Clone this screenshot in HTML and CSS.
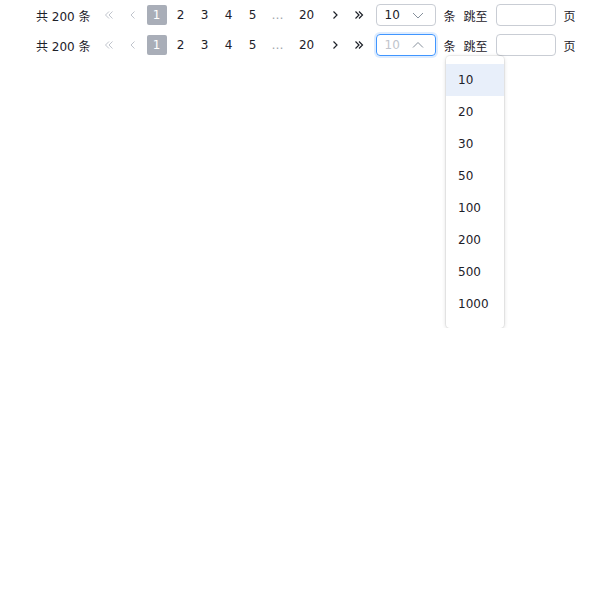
FILE: index.html
```html
<!DOCTYPE html>
<html>
<head>
<meta charset="utf-8">
<link rel="stylesheet" href="styles.css">
</head>
<body>
<div class="page">
  <div class="pager">
    <span class="total">共 200 条</span>
    <ul class="pages">
      <li class="item disabled"><svg width="12" height="12" viewBox="0 0 12 12"><path d="M6 2.5 2.5 6 6 9.5M9.5 2.5 6 6 9.5 9.5" fill="none" stroke="currentColor" stroke-width="1"/></svg></li>
      <li class="item disabled"><svg width="12" height="12" viewBox="0 0 12 12"><path d="M7.5 2.5 4 6 7.5 9.5" fill="none" stroke="currentColor" stroke-width="1"/></svg></li>
      <li class="item active">1</li>
      <li class="item">2</li>
      <li class="item">3</li>
      <li class="item">4</li>
      <li class="item">5</li>
      <li class="item ellipsis">…</li>
      <li class="item wide">20</li>
      <li class="item"><svg width="12" height="12" viewBox="0 0 12 12"><path d="M4.5 2.5 8 6 4.5 9.5" fill="none" stroke="currentColor" stroke-width="1.2"/></svg></li>
      <li class="item"><svg width="12" height="12" viewBox="0 0 12 12"><path d="M2.5 2.5 6 6 2.5 9.5M6 2.5 9.5 6 6 9.5" fill="none" stroke="currentColor" stroke-width="1.2"/></svg></li>
    </ul>
    <div class="select">
      <span class="value">10</span>
      <svg class="chev" width="14" height="14" viewBox="0 0 14 14"><path d="M2 5 7 10 12 5" fill="none" stroke="currentColor" stroke-width="1"/></svg>
    </div>
    <span class="label">条</span>
    <span class="label">跳至</span>
    <input class="jump" type="text">
    <span class="label">页</span>
  </div>
  <div class="pager">
    <span class="total">共 200 条</span>
    <ul class="pages">
      <li class="item disabled"><svg width="12" height="12" viewBox="0 0 12 12"><path d="M6 2.5 2.5 6 6 9.5M9.5 2.5 6 6 9.5 9.5" fill="none" stroke="currentColor" stroke-width="1"/></svg></li>
      <li class="item disabled"><svg width="12" height="12" viewBox="0 0 12 12"><path d="M7.5 2.5 4 6 7.5 9.5" fill="none" stroke="currentColor" stroke-width="1"/></svg></li>
      <li class="item active">1</li>
      <li class="item">2</li>
      <li class="item">3</li>
      <li class="item">4</li>
      <li class="item">5</li>
      <li class="item ellipsis">…</li>
      <li class="item wide">20</li>
      <li class="item"><svg width="12" height="12" viewBox="0 0 12 12"><path d="M4.5 2.5 8 6 4.5 9.5" fill="none" stroke="currentColor" stroke-width="1.2"/></svg></li>
      <li class="item"><svg width="12" height="12" viewBox="0 0 12 12"><path d="M2.5 2.5 6 6 2.5 9.5M6 2.5 9.5 6 6 9.5" fill="none" stroke="currentColor" stroke-width="1.2"/></svg></li>
    </ul>
    <div class="select open">
      <span class="value placeholder">10</span>
      <svg class="chev" width="14" height="14" viewBox="0 0 14 14"><path d="M2 9.5 7 4.5 12 9.5" fill="none" stroke="currentColor" stroke-width="1"/></svg>
    </div>
    <span class="label">条</span>
    <span class="label">跳至</span>
    <input class="jump" type="text">
    <span class="label">页</span>
  </div>
  <div class="size-list">
    <div class="size-opt picked">10</div>
    <div class="size-opt">20</div>
    <div class="size-opt">30</div>
    <div class="size-opt">50</div>
    <div class="size-opt">100</div>
    <div class="size-opt">200</div>
    <div class="size-opt">500</div>
    <div class="size-opt">1000</div>
  </div>
</div>
</body>
</html>
```
FILE: styles.css
```css
* { box-sizing: border-box; }
body {
  margin: 0;
  font-family: "DejaVu Sans", "Noto Sans CJK SC", sans-serif;
  font-size: 12px;
  color: #1d2129;
  background: #fff;
}
.page {
  padding: 4px 0 0 36px;
  display: flex;
  flex-direction: column;
  gap: 8px;
}
.pager {
  display: flex;
  align-items: center;
  height: 22px;
}
.total {
  margin-right: 8px;
}
.pages {
  list-style: none;
  margin: 0;
  padding: 0;
  display: flex;
  gap: 4px;
}
.item {
  min-width: 20px;
  height: 20px;
  display: flex;
  align-items: center;
  justify-content: center;
  border-radius: 2px;
  color: #1d2129;
}
.item.wide { min-width: 28px; }
.item.disabled { color: #c0c4cc; }
.item.active { background: #a9aeb8; color: #fff; }
.item.ellipsis { min-width: 22px; color: #a0a4ab; }
.select {
  margin-left: 7px;
  width: 60px;
  height: 22px;
  border: 1px solid #c9cdd4;
  border-radius: 4px;
  display: flex;
  align-items: center;
  justify-content: space-between;
  padding: 0 10px 0 8px;
}
.select .chev { color: #86909c; }
.select.open {
  border-color: #4096ff;
  box-shadow: 0 0 0 2px rgba(64,150,255,0.18);
}
.value.placeholder { color: #c0c4cc; }
.size-list {
  margin: -8px 0 0 410px;
  width: 58px;
  padding: 8px 0;
  background: #ffffff;
  border-radius: 4px;
  box-shadow: 0 0 0 1px rgba(0,0,0,0.05), 0 1px 4px rgba(0,0,0,0.16);
}
.size-opt {
  height: 32px;
  line-height: 32px;
  padding-left: 12px;
  color: #1d2129;
}
.size-opt.picked { background: #e8effa; }
.label {
  margin-left: 8px;
}
.jump {
  margin-left: 8px;
  width: 60px;
  height: 22px;
  border: 1px solid #c9cdd4;
  border-radius: 4px;
  padding: 0;
  outline: none;
}
```
